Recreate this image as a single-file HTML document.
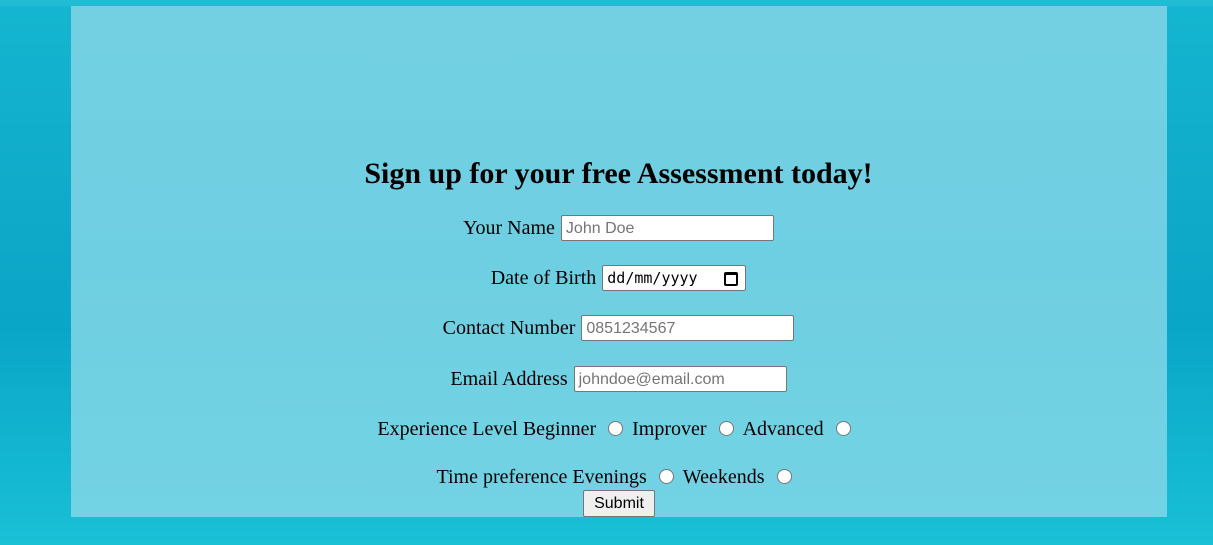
<!DOCTYPE html>
<html><head><style>
body{margin:0;width:1213px;height:545px;overflow:hidden;position:relative;
background:linear-gradient(180deg,#14b6d0 0%,#0fa9c9 40%,#0aa6c8 60%,#19c0d6 100%);
font-family:"Liberation Serif",serif;font-size:20px;color:#000}
.top{position:absolute;left:0;top:0;width:1213px;height:6px;background:#21bcd4}
.panel{position:absolute;left:71px;top:6px;width:1096px;height:511px;
background:linear-gradient(180deg,#72d0e2 0%,#6fcfe2 50%,#72d3e4 100%)}
.row{position:absolute;left:12px;width:1213px;text-align:center;white-space:nowrap;line-height:26px;height:26px}
h1{position:absolute;left:12px;width:1213px;top:154px;margin:0;text-align:center;font-size:30px;font-weight:bold;line-height:40px}
.in{display:inline-block;vertical-align:top;height:24px;border:1px solid #767676;border-radius:2px;background:#fff;
font-family:"Liberation Sans",sans-serif;font-size:16px;color:#757575;text-align:left;padding-left:4px;line-height:25px;box-sizing:content-box;margin-left:1px}
.r{display:inline-block;width:13px;height:13px;border:1px solid #767676;border-radius:50%;background:#fff;vertical-align:top;margin:5px 9px 0 12px}
.btn{position:absolute;left:583px;top:490px;width:70px;height:25px;border:1px solid #767676;border-radius:2px;background:#efefef;
font-family:"Liberation Sans",sans-serif;font-size:16px;text-align:center;line-height:25px}
</style></head><body>
<div class="top"></div>
<div class="panel"></div>
<h1>Sign up for your free Assessment today!</h1>
<div class="row" style="top:215px">Your Name <span class="in" style="width:207px">John Doe</span></div>
<div class="row" style="top:265px">Date of Birth <span class="in" style="width:138px;color:#000;font-family:'DejaVu Sans Mono','Liberation Mono',monospace;font-size:15px;position:relative">dd/mm/yyyy<span style="position:absolute;right:7px;top:6px;width:10px;height:9px;border:2px solid #000;border-top-width:3px;border-radius:2px;box-sizing:content-box"></span></span></div>
<div class="row" style="top:315px">Contact Number <span class="in" style="width:207px">0851234567</span></div>
<div class="row" style="top:366px">Email Address <span class="in" style="width:207px">johndoe@email.com</span></div>
<div class="row" style="top:416px">Experience Level Beginner<span class="r"></span>Improver<span class="r"></span>Advanced<span class="r"></span></div>
<div class="row" style="top:464px">Time preference Evenings<span class="r"></span>Weekends<span class="r"></span></div>
<div class="btn">Submit</div>
</body></html>
